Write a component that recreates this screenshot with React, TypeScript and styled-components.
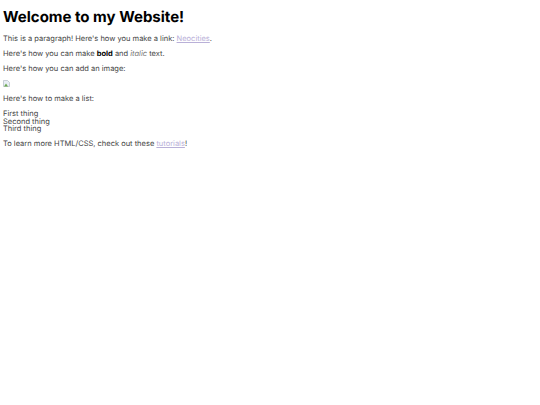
import styled, {createGlobalStyle} from 'styled-components'

const GlobalStyle = createGlobalStyle`
  html, body {
    margin: 0;
    background: #fff;
  }
`

const Page = styled.main`
  padding: 9px 3px 0;
  font-family: Inter, "Liberation Sans", sans-serif;
  font-size: 7.5px;
  line-height: 8px;
  color: #444;
  text-rendering: geometricPrecision;
`

const Title = styled.h1`
  margin: 0 0 10px;
  font-size: 15px;
  line-height: 16px;
  font-weight: 700;
  color: #000;
`

const Para = styled.p`
  margin: 0 0 7px;
`

const TextLink = styled.a`
  color: #b9b0d8;
  text-decoration: underline;
`

const Strong = styled.b`
  color: #000;
`

const Em = styled.i`
  color: #777;
`

const ThingList = styled.div`
  margin: 0 0 7px;
  line-height: 7.67px;
`

const BrokenImage = styled.svg`
  display: block;
  width: 7px;
  height: 7px;
  margin-bottom: 8px;
`

const App = () => {
  return <Page>
    <GlobalStyle/>
    <Title>Welcome to my Website!</Title>
    <Para>This is a paragraph! Here's how you make a link: <TextLink href="#">Neocities</TextLink>.</Para>
    <Para>Here's how you can make <Strong>bold</Strong> and <Em>italic</Em> text.</Para>
    <Para>Here's how you can add an image:</Para>
    <BrokenImage viewBox="0 0 7 7">
      <path d="M.5.5h4l2 2v4h-6z" fill="#e8eef5" stroke="#a9b2bd" strokeWidth=".6"/>
      <path d="M1 6.5l2-3 2 3z" fill="#6aa84f"/>
    </BrokenImage>
    <Para>Here's how to make a list:</Para>
    <ThingList>
      <div>First thing</div>
      <div>Second thing</div>
      <div>Third thing</div>
    </ThingList>
    <Para>To learn more HTML/CSS, check out these <TextLink href="#">tutorials</TextLink>!</Para>
  </Page>
}

export default App
